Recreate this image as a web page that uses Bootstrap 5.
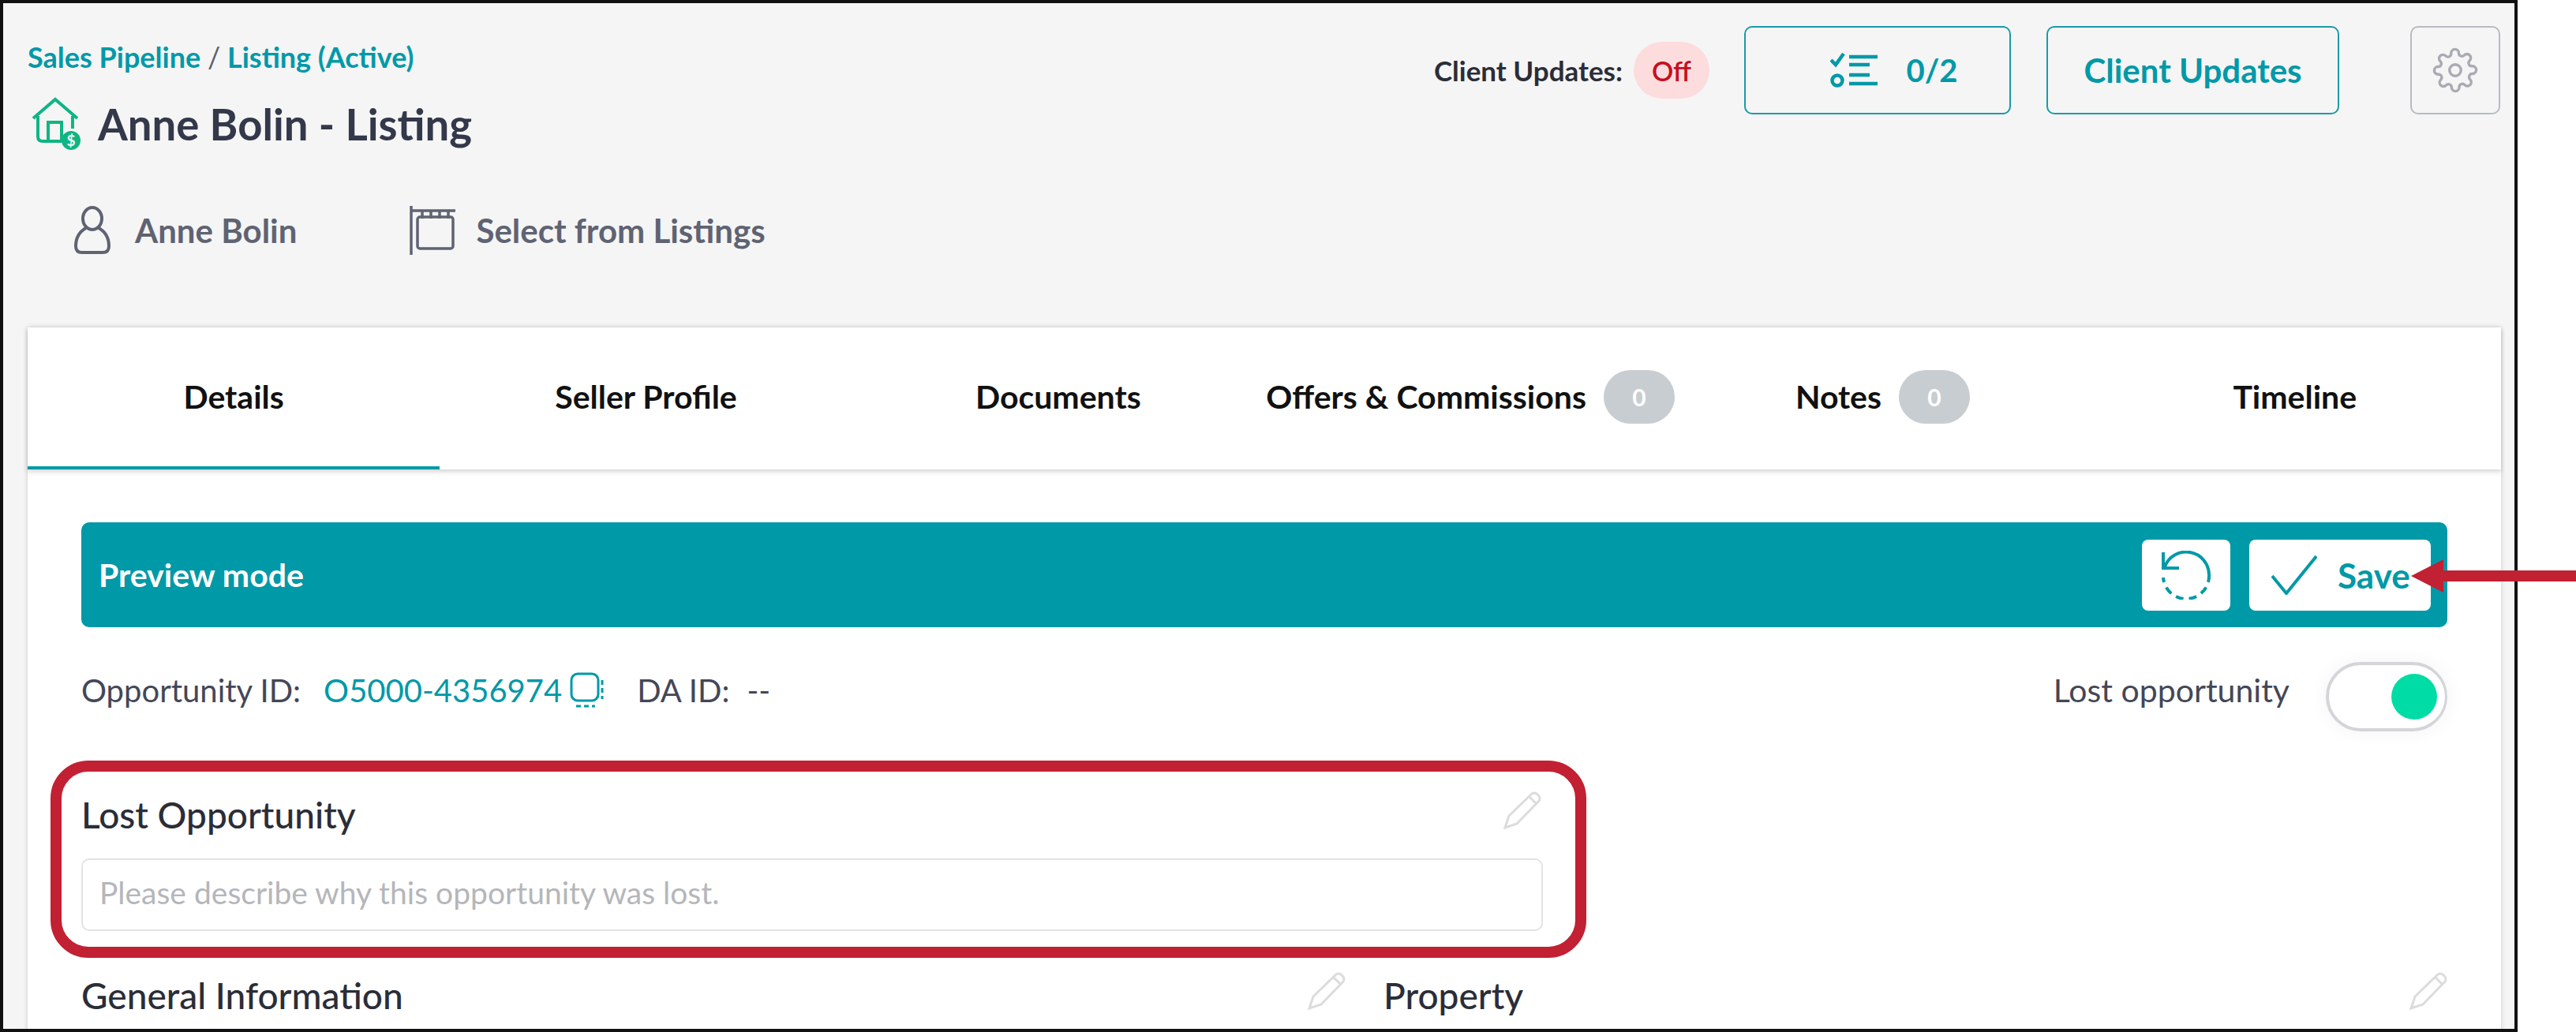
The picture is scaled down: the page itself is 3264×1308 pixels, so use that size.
<!DOCTYPE html>
<html lang="en">
<head>
<meta charset="utf-8">
<title>Anne Bolin - Listing</title>
<link rel="stylesheet" href="https://cdn.jsdelivr.net/npm/bootstrap@5.3.0/dist/css/bootstrap.min.css">
<style>
html,body{margin:0;background:#fff;overflow:hidden}
body{font-family:Lato,"Noto Sans",sans-serif;color:#3a3d4d}
.shot{width:3190px;height:1308px;position:relative;border:4px solid #111;background:#f5f5f5;overflow:hidden;padding:0 17px 0 31px}
.head-zone{height:411px;position:relative}
.crumbs{font-size:36px;font-weight:700;color:#0099a8;padding-top:48px;line-height:40px}
.crumbs span{color:#5c6070;font-weight:400}
.ttl{font-size:54.5px;font-weight:700;color:#33384a;line-height:60px;margin-top:31px;gap:19px;margin-left:4px}
.subs{margin-top:70px;margin-left:58px;gap:143px;font-size:42px;font-weight:700;color:#5f6372;line-height:60px}
.subs>div{gap:30px}
.subs>div+div{gap:26px}
.top-tools{position:absolute;right:0;top:29px;height:112px;gap:0}
.cu-label{font-size:35px;font-weight:700;color:#2b2d38;margin-right:14px}
.cu-pill{background:#fddcdd;color:#c50f1f;font-size:34px;font-weight:600;border-radius:36px;width:96px;height:72px;margin-right:44px}
.tool-btn{height:112px;border:2px solid #1a9ba8;border-radius:10px;color:#0099a8;font-weight:700;font-size:42px;background:transparent;padding:0}
.tb-a{width:338px;gap:34px;margin-right:45px;padding-left:42px}
.tb-a span{font-size:40px}
.tb-b{width:371px;margin-right:90px}
.tb-c{width:114px;border-color:#b9bbc2;margin-right:1px}
.sheet{background:#fff;box-shadow:0 0 6px rgba(0,0,0,.18);height:1000px}
.tabrow{height:180px;box-shadow:0 3px 6px rgba(0,0,0,.17)}
.tabcell{flex:1 1 0;font-size:41px;font-weight:700;color:#111;gap:22px;height:180px;border-bottom:4px solid transparent}
.tabcell.on{border-bottom-color:#0099a8}
.cnt{background:#c8cdd1;color:#fff;width:90px;height:68px;border-radius:34px;font-size:30px;font-weight:700}
.inner{padding:67px 68px 0 68px}
.pv-bar{height:133px;background:#0099a8;border-radius:10px;color:#fff;font-size:41px;font-weight:700;padding:0 21px 0 22px;gap:24px}
.pv-btn{height:90px;background:#fff;border:0;border-radius:8px;color:#0099a8;font-size:44px;font-weight:700;padding:0}
.pv-undo{width:112px}
.pv-save{width:230px;gap:26px;justify-content:flex-start!important;padding-left:28px}
.idline{margin-top:43px;font-size:40px;color:#444757;height:88px}
.idline>span:not(.tog),.idline>svg{margin-bottom:14px}
.idnum{color:#0099a8;margin:0 10px 14px 29px}
.da{margin-left:41px}
.da b{font-weight:400;margin-left:22px}
.lostlab{font-size:41px}
.tog{width:154px;height:88px;border:4px solid #d4d5d9;border-radius:44px;background:#fff;box-shadow:0 0 24px rgba(0,0,0,.05);margin-left:46px;margin-top:2px;padding-right:9px}
.tog i{display:block;width:58px;height:58px;border-radius:50%;background:#00dca5;box-shadow:0 0 0 10px #fff}
.box-title{font-size:46px;color:#2b2d38;font-weight:500;line-height:56px}
.lost-wrap{width:1852px;margin-top:79px}
.lost-wrap svg{margin:-12px 2px 0 0}
.pinput{margin-top:27px;height:92px;border:2px solid #e2e3e5;border-radius:10px;padding:0 21px 6px;font-size:39px;color:#b5b6ba;background:#fff}
.pair{margin-top:54px;gap:48px}
.pair>div{flex:1 1 0}
.pair>div:first-child{flex:0 0 1602px}
.pair svg{margin-top:-12px}
.ring{position:absolute;left:60px;top:960px;width:1946px;height:250px;border:14px solid #c22033;border-radius:48px;pointer-events:none}
.pointer{position:absolute;left:3055px;top:709px;width:209px;height:42px;z-index:3}
</style>
</head>
<body>
<div class="shot">
  <div class="head-zone">
    <div class="crumbs">Sales Pipeline <span>/</span> Listing (Active)</div>
    <div class="ttl d-flex align-items-center">
      <svg width="66" height="68" viewBox="0 0 66 68" fill="none" stroke="#0fb583" stroke-width="4"><path d="M3 27 31 3l28 24M9 24v26q0 6 6 6h26M53 24v16"/><path d="M22 54V32h17v22"/><circle cx="51" cy="55" r="12" fill="#0fb583" stroke="none"/><text x="51" y="62" font-size="19" font-weight="700" fill="#f5f5f5" stroke="none" text-anchor="middle">$</text></svg>
      <span>Anne Bolin - Listing</span>
    </div>
    <div class="subs d-flex">
      <div class="d-flex align-items-center">
        <svg width="48" height="62" viewBox="0 0 48 62" fill="none" stroke="#5f6372" stroke-width="4"><ellipse cx="24" cy="16" rx="12" ry="14"/><path d="M16 28C7 33 3 41 3 51q0 8 8 8h26q8 0 8-8c0-10-4-18-13-23"/></svg>
        <span>Anne Bolin</span>
      </div>
      <div class="d-flex align-items-center">
        <svg width="58" height="62" viewBox="0 0 58 62" fill="none" stroke="#5f6372" stroke-width="3.5"><path d="M2 0v62M2 6h56M16 6v10M27 6v10M38 6v10M49 6v10"/><rect x="10" y="14" width="45" height="40" rx="3"/></svg>
        <span>Select from Listings</span>
      </div>
    </div>
    <div class="top-tools d-flex align-items-center">
      <span class="cu-label">Client Updates:</span>
      <span class="cu-pill d-flex align-items-center justify-content-center">Off</span>
      <button class="tool-btn tb-a d-flex align-items-center justify-content-center">
        <svg width="62" height="46" viewBox="0 0 62 46" fill="none" stroke="#0099a8" stroke-width="4.5"><path d="M1 10l6 6L17 2M24 6h36M24 16h26M24 29h26M24 40h36"/><circle cx="9" cy="36" r="6.5"/></svg>
        <span>0/2</span>
      </button>
      <button class="tool-btn tb-b">Client Updates</button>
      <button class="tool-btn tb-c d-flex align-items-center justify-content-center">
        <svg width="58" height="60" viewBox="0 0 24 24" fill="none" stroke="#a9abb3" stroke-width="1.4" stroke-linejoin="round"><circle cx="12" cy="12" r="3"/><path d="M19.4 15a1.65 1.65 0 0 0 .33 1.82l.06.06a2 2 0 1 1-2.83 2.83l-.06-.06a1.65 1.65 0 0 0-2.82 1.17V21a2 2 0 1 1-4 0v-.09a1.65 1.65 0 0 0-2.82-1.1l-.06.06a2 2 0 1 1-2.83-2.83l.06-.06a1.65 1.65 0 0 0-1.17-2.82H3a2 2 0 1 1 0-4h.09a1.65 1.65 0 0 0 1.1-2.82l-.06-.06a2 2 0 1 1 2.83-2.83l.06.06a1.65 1.65 0 0 0 2.82-1.17V3a2 2 0 1 1 4 0v.09a1.65 1.65 0 0 0 2.82 1.1l.06-.06a2 2 0 1 1 2.83 2.83l-.06.06a1.65 1.65 0 0 0 1.17 2.82H21a2 2 0 1 1 0 4h-.09a1.65 1.65 0 0 0-1.51 1z"/></svg>
      </button>
    </div>
  </div>
  <div class="sheet">
    <div class="tabrow d-flex">
      <div class="tabcell on d-flex align-items-center justify-content-center">Details</div>
      <div class="tabcell d-flex align-items-center justify-content-center">Seller Profile</div>
      <div class="tabcell d-flex align-items-center justify-content-center">Documents</div>
      <div class="tabcell d-flex align-items-center justify-content-center"><span>Offers &amp; Commissions</span><span class="cnt d-flex align-items-center justify-content-center">0</span></div>
      <div class="tabcell d-flex align-items-center justify-content-center"><span>Notes</span><span class="cnt d-flex align-items-center justify-content-center">0</span></div>
      <div class="tabcell d-flex align-items-center justify-content-center">Timeline</div>
    </div>
    <div class="inner">
      <div class="pv-bar d-flex align-items-center">
        <span class="me-auto">Preview mode</span>
        <button class="pv-btn pv-undo d-flex align-items-center justify-content-center">
          <svg width="64" height="62" viewBox="0 0 64 62" fill="none" stroke="#0099a8" stroke-width="4"><path d="M3 2v20h20"/><path d="M5 20A29 29 0 0 1 61 30"/><path d="M61 30a29 29 0 0 1-58 4" stroke-dasharray="10 7"/></svg>
        </button>
        <button class="pv-btn pv-save d-flex align-items-center">
          <svg width="58" height="50" viewBox="0 0 58 50" fill="none" stroke="#0099a8" stroke-width="4"><path d="M1 26l18 22L57 1"/></svg>
          <span>Save</span>
        </button>
      </div>
      <div class="idline d-flex align-items-center">
        <span>Opportunity ID:</span>
        <span class="idnum">O5000-4356974</span>
        <svg width="44" height="46" viewBox="0 0 44 46" fill="none" stroke="#0099a8" stroke-width="3"><rect x="2" y="2" width="34" height="34" rx="8"/><path d="M41 10v24M8 43h24" stroke-dasharray="6 4"/></svg>
        <span class="da">DA ID:<b>--</b></span>
        <span class="ms-auto lostlab">Lost opportunity</span>
        <span class="tog d-flex align-items-center justify-content-end"><i></i></span>
      </div>
      <div class="lost-wrap">
        <div class="d-flex justify-content-between align-items-center">
          <span class="box-title">Lost Opportunity</span>
          <svg width="48" height="48" viewBox="0 0 48 48" fill="none" stroke="#dcdcdc" stroke-width="3"><path d="M2 46l5-15L36 3q3-2 6 0l3 3q2 3 0 6L17 41zM33 7l9 9"/></svg>
        </div>
        <div class="pinput d-flex align-items-center">Please describe why this opportunity was lost.</div>
      </div>
      <div class="pair d-flex">
        <div class="d-flex justify-content-between align-items-center">
          <span class="box-title">General Information</span>
          <svg width="48" height="48" viewBox="0 0 48 48" fill="none" stroke="#dcdcdc" stroke-width="3"><path d="M2 46l5-15L36 3q3-2 6 0l3 3q2 3 0 6L17 41zM33 7l9 9"/></svg>
        </div>
        <div class="d-flex justify-content-between align-items-center">
          <span class="box-title">Property</span>
          <svg width="48" height="48" viewBox="0 0 48 48" fill="none" stroke="#dcdcdc" stroke-width="3"><path d="M2 46l5-15L36 3q3-2 6 0l3 3q2 3 0 6L17 41zM33 7l9 9"/></svg>
        </div>
      </div>
    </div>
  </div>
  <div class="ring"></div>
</div>
<svg class="pointer" viewBox="0 0 209 42"><path d="M0 21 41 0v14h168v14H41v14z" fill="#c22033"/></svg>
<script src="https://cdn.jsdelivr.net/npm/bootstrap@5.3.0/dist/js/bootstrap.bundle.min.js"></script>
</body>
</html>
